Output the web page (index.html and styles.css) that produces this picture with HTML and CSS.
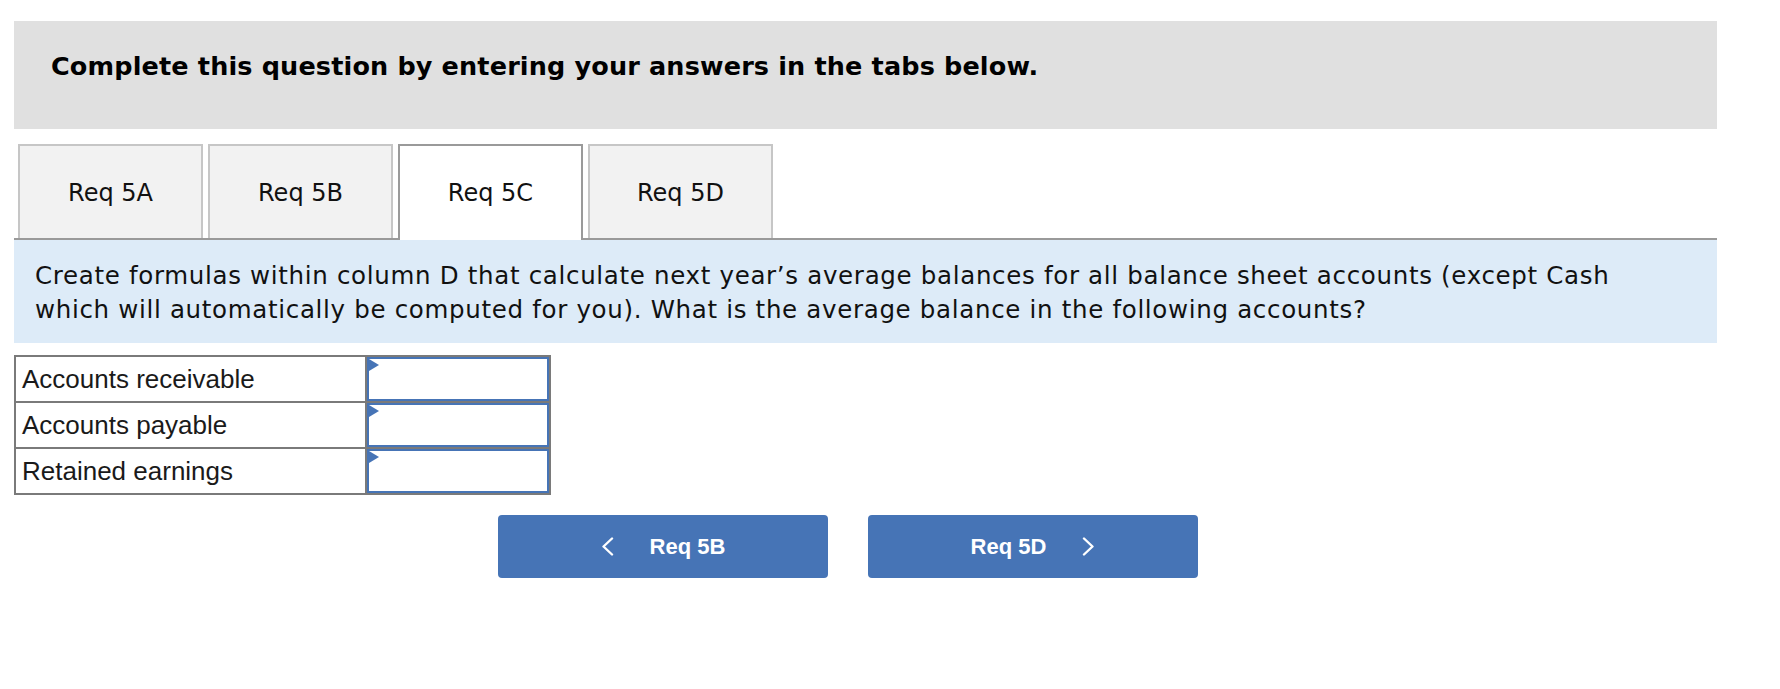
FILE: index.html
```html
<!DOCTYPE html>
<html lang="en">
<head>
<meta charset="utf-8">
<title>Req 5C</title>
<link rel="stylesheet" href="styles.css">
</head>
<body>
<div class="page">
  <div class="banner">
    <h1 class="banner-title">Complete this question by entering your answers in the tabs below.</h1>
  </div>

  <div class="tabs">
    <div class="tab">Req 5A</div>
    <div class="tab">Req 5B</div>
    <div class="tab tab-active">Req 5C</div>
    <div class="tab">Req 5D</div>
  </div>

  <div class="instructions">
    <p class="instructions-text">Create formulas within column D that calculate next year’s average balances for all balance sheet accounts (except Cash which will automatically be computed for you). What is the average balance in the following accounts?</p>
  </div>

  <table class="answers">
    <tr>
      <td class="label">Accounts receivable</td>
      <td class="cell"><div class="input"></div></td>
    </tr>
    <tr>
      <td class="label">Accounts payable</td>
      <td class="cell"><div class="input"></div></td>
    </tr>
    <tr>
      <td class="label">Retained earnings</td>
      <td class="cell"><div class="input"></div></td>
    </tr>
  </table>

  <div class="nav">
    <button class="nav-btn" type="button">
      <svg class="chev" viewBox="0 0 13 19" width="13" height="19"><polyline points="11,1.5 2.5,9.5 11,17.5" fill="none" stroke="#ffffff" stroke-width="2.4" stroke-linecap="round" stroke-linejoin="round"/></svg>
      <span>Req 5B</span>
    </button>
    <button class="nav-btn" type="button">
      <span>Req 5D</span>
      <svg class="chev" viewBox="0 0 13 19" width="13" height="19"><polyline points="2,1.5 10.5,9.5 2,17.5" fill="none" stroke="#ffffff" stroke-width="2.4" stroke-linecap="round" stroke-linejoin="round"/></svg>
    </button>
  </div>
</div>
</body>
</html>
```

FILE: styles.css
```css
* { box-sizing: border-box; }

html, body {
  margin: 0;
  padding: 0;
  background: #ffffff;
}

.page {
  width: 1717px;
  padding: 21px 0 0 14px;
  font-family: "DejaVu Sans", Verdana, sans-serif;
  color: #000;
}

.banner {
  background: #e0e0e0;
  height: 108px;
  padding: 30px 37px 0 37px;
}

.banner-title {
  margin: 0;
  font-size: 25.5px;
  letter-spacing: 0.15px;
  font-weight: bold;
  line-height: 30px;
}

.tabs {
  margin-top: 15px;
  display: flex;
  gap: 5px;
  padding-left: 4px;
  border-bottom: 2px solid #9a9a9a;
  height: 96px;
}

.tab {
  width: 185px;
  height: 94px;
  background: #f2f2f2;
  border: 2px solid #c6c6c6;
  border-bottom: none;
  display: flex;
  align-items: center;
  justify-content: center;
  font-size: 24px;
  line-height: 28px;
  color: #111;
  padding-top: 1px;
}

.tab-active {
  background: #ffffff;
  border-color: #9a9a9a;
  height: 96px;
  position: relative;
  z-index: 1;
  padding-bottom: 2px;
}

.instructions {
  background: #ddebf8;
  padding: 19px 21px 16px 21px;
}

.instructions-text {
  margin: 0;
  max-width: 1645px;
  font-size: 24.5px;
  letter-spacing: 0.68px;
  line-height: 34px;
  color: #111;
}

.answers {
  margin-top: 12px;
  border-collapse: collapse;
  font-family: "Liberation Sans", Arial, sans-serif;
}

.answers td {
  border: 2px solid #7a7a7a;
  padding: 0;
  height: 46px;
}

.label {
  width: 351px;
  padding-left: 6px !important;
  font-size: 26px;
  color: #1a1a1a;
  vertical-align: middle;
}

.cell {
  width: 184px;
}

.input {
  position: relative;
  height: 44px;
  border: 2px solid #4674b6;
  background: #fff;
}

.input::before {
  content: "";
  position: absolute;
  left: 0;
  top: 0;
  border-left: 10px solid #4674b6;
  border-top: 6.5px solid transparent;
  border-bottom: 6.5px solid transparent;
}

.nav {
  margin-top: 20px;
  padding-left: 484px;
  display: flex;
  gap: 40px;
}

.nav-btn {
  width: 330px;
  height: 63px;
  background: #4674b6;
  border: none;
  border-radius: 4px;
  color: #ffffff;
  display: flex;
  align-items: center;
  justify-content: center;
  gap: 36px;
  font-family: "Liberation Sans", Arial, sans-serif;
  font-weight: bold;
  font-size: 22px;
  padding: 0;
}

.chev {
  display: block;
}
```
